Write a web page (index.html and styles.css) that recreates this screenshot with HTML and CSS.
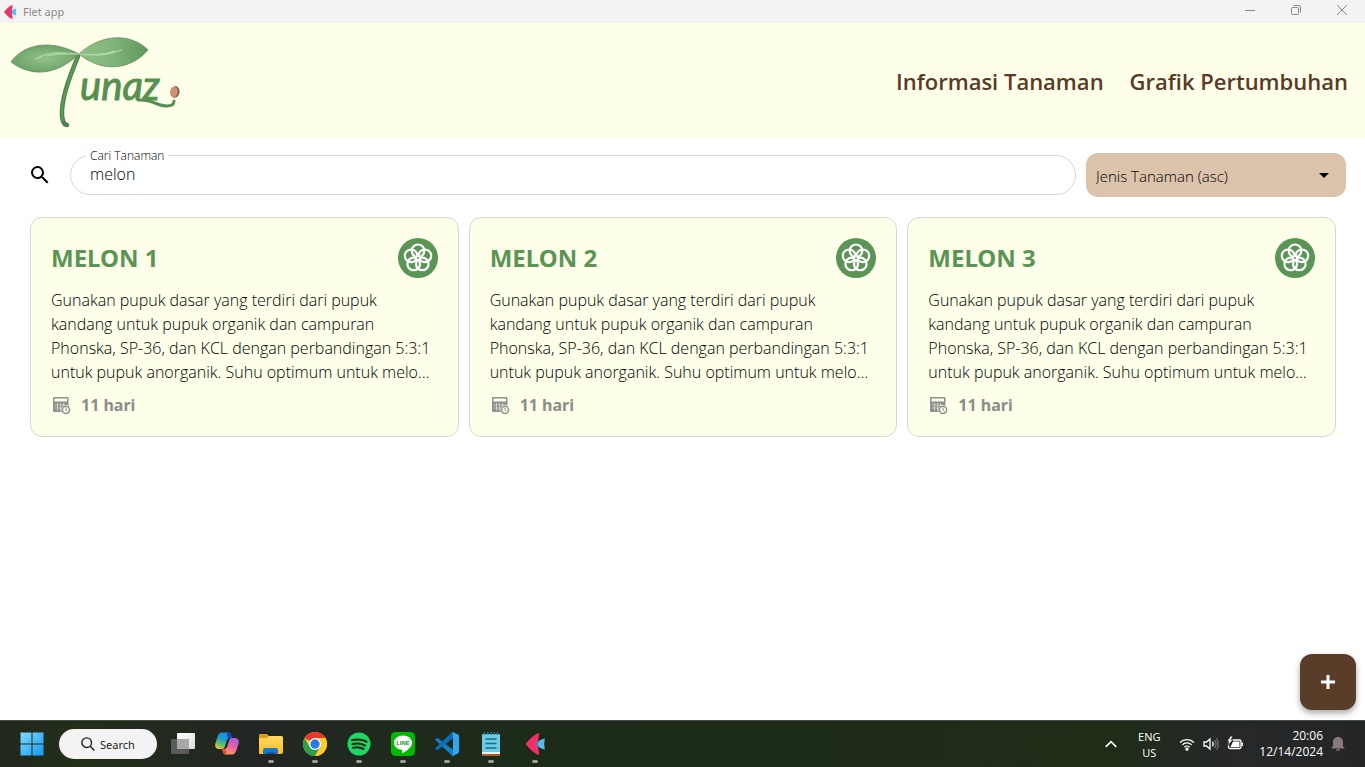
FILE: index.html
```html
<!DOCTYPE html>
<html lang="id">
<head>
<meta charset="utf-8">
<title>Flet app</title>
<link rel="stylesheet" href="styles.css">
</head>
<body>
<svg class="defs" aria-hidden="true">
  <defs>
    <symbol id="flet" viewBox="0 0 20 20">
      <path d="M13.500 0C10 .5 4 6.500 1.500 10c2.500 3.500 8.500 9.500 12 10 .6-3-1-6-1-10s1.600-7 1-10z" fill="#ef3166"/>
      <path d="M10.500 10c2-2.500 5-4.500 8.500-5-.8 3-.8 7 0 10-3.500-.5-6.500-2.500-8.500-5z" fill="#5bb8ea"/>
      <path d="M10.500 10l2.300-2.200v4.400z" fill="#2878bd"/>
    </symbol>
    <symbol id="flower" viewBox="0 0 40 40">
      <circle cx="20" cy="20" r="20" fill="#5b9555"/>
      <g fill="none" stroke="#fff" stroke-width="2.2">
        <circle cx="20" cy="12.800" r="6.300"/>
        <circle cx="26.900" cy="17.800" r="6.300"/>
        <circle cx="24.300" cy="25.900" r="6.300"/>
        <circle cx="15.700" cy="25.900" r="6.300"/>
        <circle cx="13.100" cy="17.800" r="6.300"/>
      </g>
      <circle cx="20" cy="20" r="2.600" fill="#fff"/>
      <circle cx="20" cy="20" r="1" fill="#5b9555"/>
    </symbol>
    <symbol id="calendar" viewBox="0 0 20 20">
      <rect x="2" y="2" width="15.500" height="15" rx="1" fill="#8f8f8f"/>
      <path d="M3.500 3.500H16v3H3.500z" fill="#feffe9"/>
      <path d="M3.500 10h12M3.500 13h8M6.500 8v8M9.500 8v8M12.500 8v4" stroke="#feffe9" stroke-width=".5"/>
      <circle cx="15" cy="14.800" r="4.700" fill="#feffe9"/>
      <circle cx="15" cy="14.800" r="3.600" fill="#feffe9" stroke="#8f8f8f" stroke-width="1.500"/>
      <path d="M15 12.500v2.500l1.500 1" fill="none" stroke="#8f8f8f"/>
    </symbol>
  </defs>
</svg>

<div class="titlebar">
  <svg class="title-icon" aria-hidden="true"><use href="#flet"/></svg>
  <span class="title-text">Flet app</span>
  <div class="window-controls">
    <button aria-label="Minimize"><svg viewBox="0 0 12 12"><path d="M1 6.500h10"/></svg></button>
    <button aria-label="Restore"><svg viewBox="0 0 12 12"><rect x="1.500" y="3.500" width="7" height="7" rx="1.200"/><path d="M3.500 1.500H9A1.500 1.500 0 0 1 10.500 3v5.500"/></svg></button>
    <button aria-label="Close"><svg viewBox="0 0 12 12"><path d="M1 1l10 10M11 1L1 11"/></svg></button>
  </div>
</div>

<header class="header">
  <svg class="logo" viewBox="0 0 172 94" role="img" aria-label="Tunaz">
    <defs>
      <radialGradient id="leafL"><stop offset="0" stop-color="#94c18a"/><stop offset="1" stop-color="#6da467"/></radialGradient>
      <linearGradient id="leafR"><stop offset="0" stop-color="#90c285"/><stop offset=".5" stop-color="#80b47a"/><stop offset="1" stop-color="#5c975a"/></linearGradient>
    </defs>
    <path d="M68 20C64 31 57 46 54 61c-2 9-3 18-1 24 1 3 3 4 4 4" fill="none" stroke="#4d8050" stroke-width="4.500" stroke-linecap="round"/>
    <path d="M68 20C63 33 58 45 54 61c-2 9-3 18-1 24" fill="none" stroke="#5f9c57" stroke-width="2"/>
    <path d="M1 26C13 9 39 2 69 18C46 40 21 41 1 26z" fill="url(#leafL)" stroke="#668a61" stroke-width=".8"/>
    <path d="M69 18C92-3 121-3 138 14C121 34 92 37 69 18z" fill="url(#leafR)" stroke="#668a61" stroke-width=".8"/>
    <path d="M26 23C42 13 57 18 69 18c19 2 29 1 43-4M37 20c10-3 18-2 31-2 16 1 25 1 37-3" fill="none" stroke="#b4d9aa" stroke-width="1.200"/>
    <text class="logo-text" x="70" y="64">unaz</text>
    <path d="M128 64c14-1 19 6 29 6 5 0 7-2 7-5" fill="none" stroke="#578f51" stroke-width="3" stroke-linecap="round"/>
    <ellipse cx="165" cy="56" rx="4.500" ry="5.800" transform="rotate(12 165 56)" fill="#7c594d"/>
    <ellipse cx="164" cy="56" rx="3.800" ry="5.200" transform="rotate(12 164 56)" fill="#cb9171"/>
  </svg>
  <nav class="nav">
    <a href="#informasi">Informasi Tanaman</a>
    <a href="#grafik">Grafik Pertumbuhan</a>
  </nav>
</header>

<main class="main">
  <form class="filters">
    <button class="search-btn" type="button" aria-label="Cari"><svg viewBox="0 0 24 24"><path d="M15.500 14h-.79l-.28-.27A6.471 6.471 0 0 0 16 9.500 6.500 6.500 0 1 0 9.500 16c1.610 0 3.090-.59 4.230-1.570l.27.28v.79l5 4.990L20.490 19l-4.990-5zm-6 0C7.010 14 5 11.990 5 9.500S7.010 5 9.500 5 14 7.010 14 9.500 11.990 14 9.500 14z"/></svg></button>
    <div class="field">
      <label for="q">Cari Tanaman</label>
      <input id="q" type="text" value="melon">
    </div>
    <div class="sort">
      <select aria-label="Urutkan"><option>Jenis Tanaman (asc)</option></select>
      <svg viewBox="0 0 24 24" aria-hidden="true"><path d="M7 10l5 5 5-5z"/></svg>
    </div>
  </form>

  <section class="cards">
    <article class="card">
      <div class="card-head"><h2>MELON 1</h2><svg aria-hidden="true"><use href="#flower"/></svg></div>
      <p>Gunakan pupuk dasar yang terdiri dari pupuk kandang untuk pupuk organik dan campuran Phonska, SP-36, dan KCL dengan perbandingan 5:3:1 untuk pupuk anorganik. Suhu optimum untuk melo…</p>
      <div class="age"><svg aria-hidden="true"><use href="#calendar"/></svg><span>11 hari</span></div>
    </article>
    <article class="card">
      <div class="card-head"><h2>MELON 2</h2><svg aria-hidden="true"><use href="#flower"/></svg></div>
      <p>Gunakan pupuk dasar yang terdiri dari pupuk kandang untuk pupuk organik dan campuran Phonska, SP-36, dan KCL dengan perbandingan 5:3:1 untuk pupuk anorganik. Suhu optimum untuk melo…</p>
      <div class="age"><svg aria-hidden="true"><use href="#calendar"/></svg><span>11 hari</span></div>
    </article>
    <article class="card">
      <div class="card-head"><h2>MELON 3</h2><svg aria-hidden="true"><use href="#flower"/></svg></div>
      <p>Gunakan pupuk dasar yang terdiri dari pupuk kandang untuk pupuk organik dan campuran Phonska, SP-36, dan KCL dengan perbandingan 5:3:1 untuk pupuk anorganik. Suhu optimum untuk melo…</p>
      <div class="age"><svg aria-hidden="true"><use href="#calendar"/></svg><span>11 hari</span></div>
    </article>
  </section>

  <button class="fab" aria-label="Tambah tanaman"><svg viewBox="0 0 14 14"><path d="M7 0v14M0 7h14"/></svg></button>
</main>

<footer class="taskbar">
  <div class="apps">
    <button class="app" aria-label="Start"><svg viewBox="0 0 24 24">
      <defs><linearGradient id="win" x1="0" y1="0" x2="24" y2="24" gradientUnits="userSpaceOnUse"><stop offset="0" stop-color="#83ddfc"/><stop offset="1" stop-color="#1296f2"/></linearGradient></defs>
      <path d="M.5.5h11v11H.5zM12.500.5h11v11h-11zM.5 12.500h11v11H.5zM12.500 12.500h11v11h-11z" fill="url(#win)"/></svg></button>
    <button class="search-pill"><svg viewBox="0 0 14 14"><circle cx="5.700" cy="5.700" r="4.800"/><path d="M9.200 9.200l4.200 4.200"/></svg>Search</button>
    <button class="app" aria-label="Task view"><svg viewBox="0 0 24 24">
      <defs><linearGradient id="tv" x2="1" y2="1"><stop offset="0" stop-color="#fff"/><stop offset="1" stop-color="#ddd"/></linearGradient></defs>
      <rect x="6" y="1" width="18" height="16" rx="1" fill="url(#tv)"/><rect y="7" width="18" height="15" rx="1" fill="#5b5b5b"/><path d="M6 7h12v10H6z" fill="#a8a8a8"/></svg></button>
    <button class="app" aria-label="Copilot"><svg viewBox="0 0 24 24">
      <defs>
        <linearGradient id="c1" x1=".7" y1="0" x2=".2" y2="1"><stop offset="0" stop-color="#188be2"/><stop offset=".4" stop-color="#1c9ad8"/><stop offset=".7" stop-color="#5fbd71"/><stop offset="1" stop-color="#f3c52c"/></linearGradient>
        <linearGradient id="c2" x1=".7" y1="0" x2=".3" y2="1"><stop offset="0" stop-color="#a75be2"/><stop offset=".5" stop-color="#e963a0"/><stop offset="1" stop-color="#ff9b54"/></linearGradient>
      </defs>
      <path d="M17 6l-1-3c-.5-2-1.500-2.500-3-2.500H7C4.500.5 3.300 2.500 2.500 5L.5 11c-1 4 .5 6 3.500 6h3c2 0 2.500-1 3-3l2-6c.5-1.500 1.500-2 3-2z" fill="url(#c1)"/>
      <path d="M12 .5h1c1.500 0 2.500.5 3 2.500l1 3h-3c-1.500 0-2.300-2-2-5.500z" fill="#1545c4"/>
      <path d="M7 17l1 3c.5 2 1.500 2.500 3 2.500h6c2.500 0 3.700-2 4.500-4.500l2-6c1-4-.5-6-3.500-6h-3c-2 0-2.500 1-3 3l-2 6c-.5 1.500-1.500 2-3 2z" fill="url(#c2)"/>
      <path d="M7 17l1 3c.5 2 1.500 2.500 3 2.500 1-2 0-5-2-5.500z" fill="#e44a3b"/></svg></button>
    <button class="app running" aria-label="File Explorer"><svg viewBox="0 0 24 24">
      <defs><linearGradient id="fd" x2="0" y2="1"><stop offset="0" stop-color="#ffdb67"/><stop offset="1" stop-color="#fcbd1c"/></linearGradient></defs>
      <path d="M0 3q0-1 1-1h7l2 2h12q2 0 2 2v6H0z" fill="#dc9b10"/><path d="M0 6h8l2-2h12q2 0 2 2v14q0 2-2 2H0z" fill="url(#fd)"/><path d="M4 22v-4q0-2 2-2h11q2 0 2 2v4z" fill="#1979c5"/><path d="M8 22v-1.500h8V22z" fill="#0e4f96"/></svg></button>
    <button class="app running" aria-label="Chrome"><svg viewBox="0 0 24 24">
      <circle cx="12" cy="12" r="12" fill="#fdcb2d"/><path d="M12 12L1.600 6A12 12 0 0 1 22.400 6z" fill="#e33b2e"/><path d="M1.600 6A12 12 0 0 0 12 24l5.200-9L12 12 6.800 15z" fill="#2c9f4b"/><path d="M12 6h10.400A12 12 0 0 1 12 24l5.200-9z" fill="#fdcb2d"/><circle cx="12" cy="12" r="6" fill="#fff"/><circle cx="12" cy="12" r="4.700" fill="#287be8"/></svg></button>
    <button class="app running" aria-label="Spotify"><svg viewBox="0 0 24 24">
      <circle cx="12" cy="12" r="11.500" fill="#1ed760"/><path d="M5 8.300c5-1.500 10-1 14.500 1.400M5.500 12.200c4.500-1.300 8.700-.8 12.500 1.300M6 15.800c4-1 7.200-.6 10.500 1.200" fill="none" stroke="#12251a" stroke-width="2" stroke-linecap="round"/></svg></button>
    <button class="app running" aria-label="LINE"><svg viewBox="0 0 24 24">
      <rect width="24" height="24" rx="4.500" fill="#00b900"/><path d="M12 3.500c-5 0-9 3.200-9 7.200 0 3.600 3.200 6.600 7.500 7.100 1 .2.900 1 .7 2.700 0 .5.400.6.800.4 1.500-.8 9-5 9-10.200 0-4-4-7.200-9-7.200z" fill="#fff"/><text class="line-text" x="12" y="13" text-anchor="middle">LINE</text></svg></button>
    <button class="app running" aria-label="Visual Studio Code"><svg viewBox="0 0 24 24">
      <path d="M0 7.700l1.600-1.500q.6-.5 1.300 0L19 18.500v5L17.500 24z" fill="#1180c9"/><path d="M0 16.300l1.600 1.500q.6.500 1.300 0L19 5.500v-5L17.500 0z" fill="#0870b8"/><path d="M17.500 0L23 2.600q1 .4 1 1.400v16q0 1-1 1.400L17.500 24q-.8.100-1.500-.5 2 .7 2-1.500V2q0-2.200-2-1.500.7-.6 1.500-.5z" fill="#31a8f5"/></svg></button>
    <button class="app running" aria-label="Notepad"><svg viewBox="0 0 24 24">
      <rect x="3" y="2" width="18" height="21" rx="1" fill="#6ccbe5"/><path d="M3 20h18v2H3z" fill="#f0eee9"/><path d="M3 22h18v2H3z" fill="#ad5b23"/><path d="M6.500 7h11M6.500 11.500h11M6.500 16h11" stroke="#176b8b" stroke-width="1.500"/><path d="M5.500 0v3M8.700 0v3M12 0v3M15.200 0v3M18.500 0v3" stroke="#237d9c" stroke-width="1.300"/></svg></button>
    <button class="app running" aria-label="Flet"><svg viewBox="0 0 24 24"><use href="#flet" x="1" y="1" width="22" height="22"/></svg></button>
  </div>
  <div class="tray">
    <button class="chevron" aria-label="Show hidden icons"><svg viewBox="0 0 12 12"><path d="M1.500 8.500L6 4l4.500 4.500"/></svg></button>
    <div class="lang"><span>ENG</span><span>US</span></div>
    <div class="status">
      <svg viewBox="0 0 16 16"><path d="M1 6.500a10 10 0 0 1 14 0M3.200 8.900a6.800 6.800 0 0 1 9.600 0M5.400 11.200a3.700 3.700 0 0 1 5.200 0"/><circle cx="8" cy="13.200" r="1" fill="#fff"/></svg>
      <svg viewBox="0 0 16 16"><path d="M1 6v4h2.500L7 13V3L3.500 6zM9.500 5.700q1.500 2.300 0 4.600"/><path d="M11.500 4q3 4 0 8M13.500 2.500q3.500 5.500 0 11" opacity=".35"/></svg>
      <svg viewBox="0 0 16 16"><rect x="1.500" y="4" width="12.500" height="8.500" rx="1.500"/><path d="M6 5.500h6.500V11H3.500z" fill="#fff" stroke="none"/><path d="M15.300 6.500v3.500"/><path d="M3.500 0L0 5.500h2L1 9.500 6 4H4l2-4z" fill="#fff" stroke="#222b20" stroke-width=".8"/></svg>
    </div>
    <div class="clock"><span>20:06</span><span>12/14/2024</span></div>
    <button class="bell" aria-label="Notifications"><svg viewBox="0 0 16 16"><path d="M8 1C5 1 3 3.200 3 6v4l-1.800 2.500h13.600L13 10V6c0-2.800-2-5-5-5zM6 13.300h4q-.3 1.700-2 1.700t-2-1.700z"/></svg></button>
  </div>
</footer>
</body>
</html>
```
FILE: styles.css
```css
* {
  box-sizing: border-box;
}

body {
  margin: 0;
  min-height: 100vh;
  display: flex;
  flex-direction: column;
  background: #fff;
  color: #000;
  font-family: "Noto Sans", "Open Sans", sans-serif;
}

button {
  border: 0;
  padding: 0;
  background: none;
  font: inherit;
  color: inherit;
}

.defs {
  position: absolute;
  width: 0;
  height: 0;
}

.titlebar {
  display: flex;
  align-items: center;
  height: 23px;
  padding-left: 3px;
  background: #f3f3f3;
  color: #8a8a8a;
}

.title-icon {
  width: 14px;
  height: 14px;
}

.title-text {
  margin-left: 6px;
  font-size: 11px;
}

.window-controls {
  display: flex;
  align-self: flex-start;
  margin-left: auto;
  height: 20px;
}

.window-controls button {
  width: 46px;
  display: grid;
  place-items: center;
}

.window-controls svg {
  width: 12px;
  height: 12px;
  fill: none;
  stroke: #888;
}

.header {
  display: flex;
  align-items: center;
  justify-content: space-between;
  height: 115px;
  padding: 0 17px 0 10px;
  background: #feffe9;
}

.logo {
  width: 172px;
  height: 94px;
  margin-top: 4px;
}

.logo-text {
  font: italic 40px "Lato", sans-serif;
  fill: #578f51;
  stroke: #578f51;
  stroke-width: 1px;
}

.nav {
  display: flex;
  gap: 26px;
}

.nav a {
  color: #5a3a27;
  font-family: "Open Sans", "Noto Sans", sans-serif;
  font-size: 22px;
  font-weight: 640;
  line-height: 32px;
  text-decoration: none;
}

.main {
  flex: 1;
  position: relative;
  padding: 15px 19px 0 30px;
}

.filters {
  display: flex;
  align-items: center;
  gap: 10px;
  height: 44px;
}

.search-btn {
  width: 30px;
  height: 24px;
}

.search-btn svg {
  display: block;
  width: 24px;
  height: 24px;
  margin-left: -2px;
}

.field {
  flex: 1;
  position: relative;
}

.field label {
  position: absolute;
  left: 16px;
  top: -7px;
  padding: 0 4px;
  background: #fff;
  font-family: "Open Sans", sans-serif;
  font-size: 12px;
  font-weight: 350;
  line-height: 16px;
}

.field input {
  display: block;
  width: 100%;
  height: 40px;
  padding: 0 19px 2px;
  border: 1px solid #d6d6d6;
  border-radius: 20px;
  background: #fff;
  color: #000;
  font: 350 16px "Open Sans", sans-serif;
}

.sort {
  position: relative;
  width: 260px;
}

.sort select {
  appearance: none;
  display: block;
  width: 100%;
  height: 44px;
  padding: 2px 10px 0;
  border: 0;
  border-radius: 12px;
  background: #dcc3ab;
  color: #000;
  font: 350 15px "Open Sans", sans-serif;
}

.sort svg {
  position: absolute;
  right: 10px;
  top: 10px;
  width: 24px;
  height: 24px;
  pointer-events: none;
}

.cards {
  display: grid;
  grid-template-columns: repeat(3, 1fr);
  gap: 10px;
  margin: 20px 10px 0 0;
}

.card {
  padding: 20px;
  border: 1px solid #d6d6d6;
  border-radius: 12px;
  background: #feffe9;
}

.card-head {
  display: flex;
  align-items: center;
  justify-content: space-between;
}

.card-head svg {
  width: 40px;
  height: 40px;
}

.card h2 {
  margin: 0;
  color: #5b9555;
  font-size: 24px;
  line-height: 40px;
}

.card p {
  margin: 10px 0;
  font-family: "Open Sans", "Noto Sans", sans-serif;
  font-size: 16px;
  font-weight: 340;
  line-height: 24px;
}

.age {
  display: flex;
  align-items: center;
  gap: 10px;
  height: 22px;
  color: #8c8c8c;
  font-size: 16px;
  font-weight: 700;
}

.age svg {
  width: 20px;
  height: 20px;
}

.fab {
  position: absolute;
  right: 9px;
  bottom: 10px;
  display: grid;
  place-items: center;
  width: 56px;
  height: 56px;
  border-radius: 12px;
  background: #5a3d28;
  box-shadow: 0 3px 6px rgba(0, 0, 0, 0.35);
}

.fab svg {
  width: 14px;
  height: 14px;
  stroke: #fff;
  stroke-width: 3;
}

.taskbar {
  display: flex;
  align-items: center;
  justify-content: space-between;
  height: 47px;
  padding: 0 19px 0 10px;
  border-top: 1px solid #454b45;
  background: linear-gradient(90deg, #20281d 0%, #222f19 6%, #222523 19%, #1f2a1d 28%, #1c2b19 40%, #1e2c18 82%, #262829 90%, #242626 100%);
  color: #fff;
}

.apps,
.tray,
.status {
  display: flex;
  align-items: center;
}

.app {
  position: relative;
  display: grid;
  place-items: center;
  width: 44px;
  height: 46px;
}

.app svg {
  width: 24px;
  height: 24px;
}

.running::after {
  content: "";
  position: absolute;
  bottom: 4px;
  left: 19px;
  width: 6px;
  height: 3px;
  border-radius: 2px;
  background: #9b9f9a;
}

.line-text {
  font: 700 6px "Liberation Sans", sans-serif;
  fill: #00a900;
}

.search-pill {
  display: flex;
  align-items: center;
  justify-content: center;
  gap: 5px;
  width: 98px;
  height: 30px;
  margin: 0 4px 0 5px;
  border-radius: 15px;
  background: #f3f3f3;
  color: #222;
  font-size: 11px;
}

.search-pill svg {
  width: 14px;
  height: 14px;
  fill: none;
  stroke: #222;
  stroke-width: 1.4;
}

.chevron,
.bell {
  display: grid;
  place-items: center;
}

.chevron svg {
  width: 14px;
  height: 14px;
  fill: none;
  stroke: #fff;
  stroke-width: 1.4;
}

.lang,
.clock {
  display: flex;
  flex-direction: column;
  font-family: "Open Sans", sans-serif;
  font-size: 11px;
  line-height: 16px;
}

.lang {
  align-items: center;
  width: 24px;
  margin: 2px 18px 0 19px;
}

.clock {
  align-items: flex-end;
  min-width: 62px;
  margin: 0 7px 0 16px;
  font-size: 12px;
}

.status {
  gap: 8px;
}

.status svg {
  width: 16px;
  height: 16px;
  fill: none;
  stroke: #fff;
  stroke-width: 1.3;
}

.bell svg {
  width: 16px;
  height: 16px;
  fill: #857b7b;
}
```
